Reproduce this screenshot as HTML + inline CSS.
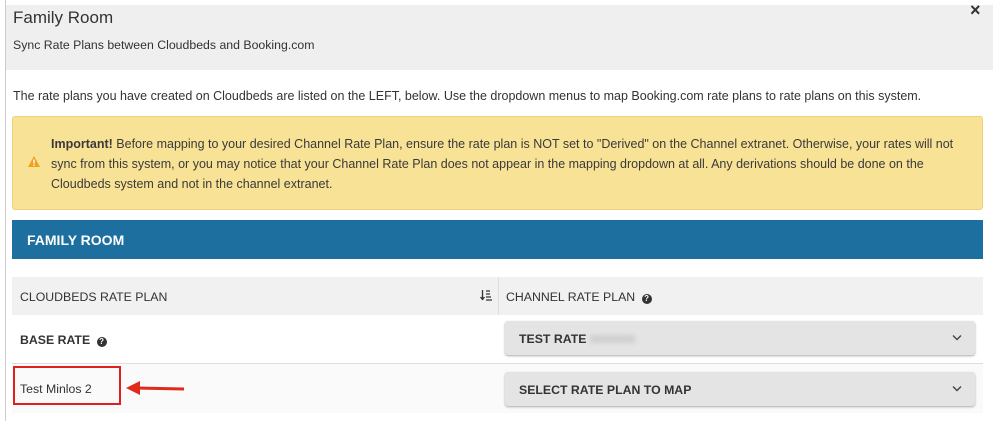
<!DOCTYPE html><html><head><style>
body{margin:0;width:995px;height:421px;background:#fff;font-family:"Liberation Sans",sans-serif;color:#333;position:relative;overflow:hidden}
.a{position:absolute}
.q{display:inline-block;width:10px;height:10px;border-radius:50%;background:#333;color:#fff;font-size:8px;line-height:10px;text-align:center;font-weight:bold;vertical-align:0px;margin-left:3px}
</style></head><body>
<div class="a" style="left:5px;top:0;width:1px;height:421px;background:#ccc"></div>
<div class="a" style="left:6px;top:5px;width:987px;height:65px;background:#efefef"></div>
<div class="a" style="left:13px;top:8px;font-size:17px;color:#333">Family Room</div>
<div class="a" style="left:13px;top:38px;font-size:12.3px">Sync Rate Plans between Cloudbeds and Booking.com</div>
<div class="a" style="left:970px;top:0px;font-size:18px;color:#333;font-weight:bold">×</div>
<div class="a" style="left:13px;top:89px;font-size:12.5px">The rate plans you have created on Cloudbeds are listed on the LEFT, below. Use the dropdown menus to map Booking.com rate plans to rate plans on this system.</div>
<div class="a" style="left:12px;top:116px;width:969px;height:92px;background:#f8e296;border:1px solid #ecd27a;border-radius:3px"></div>
<svg class="a" style="left:28px;top:156px" width="12" height="11"><polygon points="6,0 12,11 0,11" fill="#f0a21e"/><rect x="5.3" y="3.5" width="1.4" height="4" fill="#fff"/><rect x="5.3" y="8.5" width="1.4" height="1.4" fill="#fff"/></svg>
<div class="a" style="left:51px;top:134px;width:925px;font-size:12.5px;line-height:20px;color:#3a3a3a"><b>Important!</b> Before mapping to your desired Channel Rate Plan, ensure the rate plan is NOT set to "Derived" on the Channel extranet. Otherwise, your rates will not sync from this system, or you may notice that your Channel Rate Plan does not appear in the mapping dropdown at all. Any derivations should be done on the Cloudbeds system and not in the channel extranet.</div>
<div class="a" style="left:12px;top:220px;width:971px;height:39px;background:#1c6f9f"></div>
<div class="a" style="left:27px;top:232px;color:#fff;font-weight:bold;font-size:14px">FAMILY ROOM</div>
<div class="a" style="left:12px;top:277px;width:971px;height:38px;background:#f1f1f1"></div>
<div class="a" style="left:498px;top:277px;width:1px;height:38px;background:#ddd"></div>
<div class="a" style="left:20px;top:290px;font-size:12.3px">CLOUDBEDS RATE PLAN</div>
<svg class="a" style="left:480px;top:289px" width="12" height="12"><path d="M2.5 1v9M0.5 8l2 2.5 2-2.5" stroke="#333" stroke-width="1.3" fill="none"/><path d="M6 2h4M6 5h4M6 8h5M6 11h6" stroke="#333" stroke-width="1.2"/></svg>
<div class="a" style="left:506px;top:290px;font-size:12.3px">CHANNEL RATE PLAN <span class="q">?</span></div>
<div class="a" style="left:20px;top:333px;font-size:12.3px;font-weight:bold">BASE RATE <span class="q">?</span></div>
<div class="a" style="left:12px;top:363px;width:971px;height:1px;background:#ddd"></div>
<div class="a" style="left:12px;top:364px;width:971px;height:49px;background:#fafafa"></div>
<div class="a" style="left:505px;top:321px;width:470px;height:34px;background:#e4e4e4;border-radius:3px;box-shadow:0 1px 2px #aaa"></div>
<div class="a" style="left:519px;top:332px;font-size:12.3px;font-weight:bold">TEST RATE <span style="display:inline-block;width:45px;height:8px;background:#d0d0d0;filter:blur(2px)"></span></div>
<svg class="a" style="left:952px;top:334px" width="10" height="7"><path d="M1 1.5l4 4 4-4" stroke="#444" stroke-width="1.4" fill="none"/></svg>
<div class="a" style="left:505px;top:372px;width:470px;height:34px;background:#e4e4e4;border-radius:3px;box-shadow:0 1px 2px #aaa"></div>
<div class="a" style="left:519px;top:383px;font-size:12.3px;font-weight:bold">SELECT RATE PLAN TO MAP</div>
<svg class="a" style="left:952px;top:385px" width="10" height="7"><path d="M1 1.5l4 4 4-4" stroke="#444" stroke-width="1.4" fill="none"/></svg>
<div class="a" style="left:13px;top:366px;width:104px;height:35px;border:2px solid #e02020"></div>
<div class="a" style="left:20px;top:382px;font-size:12.3px">Test Minlos 2</div>
<svg class="a" style="left:124px;top:380px" width="62" height="16"><line x1="12" y1="8" x2="60" y2="9" stroke="#e02a1a" stroke-width="3"/><polygon points="2,8 16,1 16,15" fill="#e02a1a"/></svg>
</body></html>
